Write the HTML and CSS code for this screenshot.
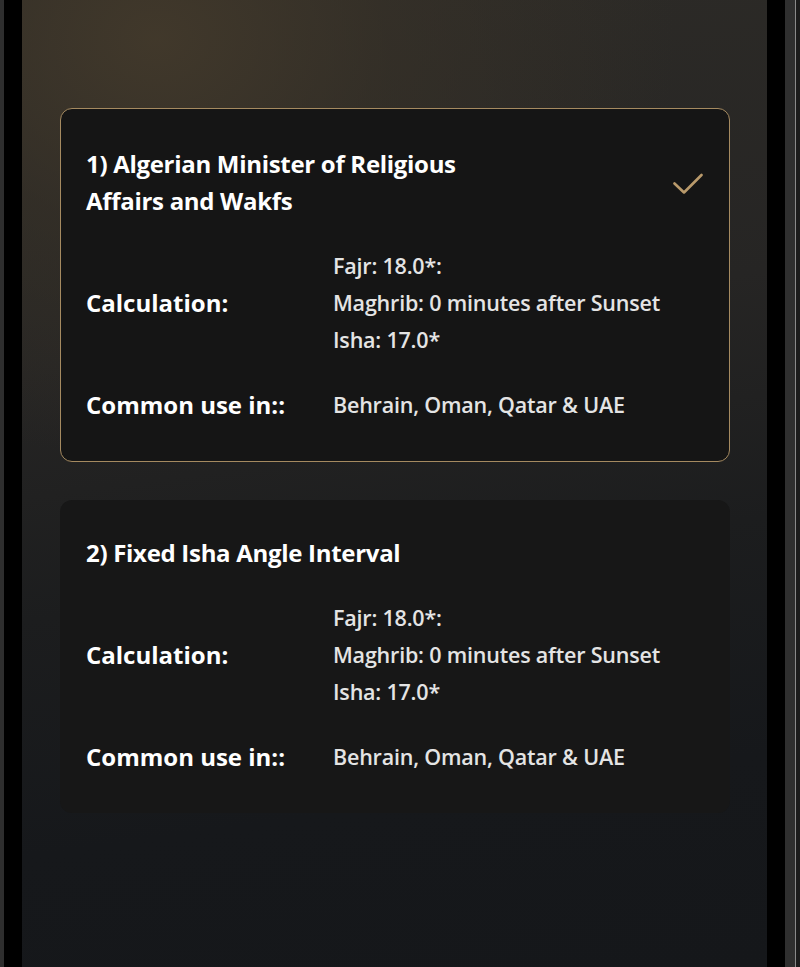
FILE: index.html
```html
<!DOCTYPE html>
<html lang="en">
<head>
<meta charset="utf-8">
<title>Calculation methods</title>
<link rel="stylesheet" href="styles.css">
</head>
<body>
<div class="device">
  <div class="edge-left"></div>
  <div class="bezel"></div>
  <main class="screen">
    <section class="card card--selected">
      <div class="card-head">
        <h2 class="card-title">1) Algerian Minister of Religious<br>Affairs and Wakfs</h2>
        <svg class="check" width="30" height="22" viewBox="0 0 30 22" aria-hidden="true">
          <path d="M1.5 10.5 L11 19.5 L28.5 2" fill="none" stroke="#b99a6b" stroke-width="2.6" stroke-linecap="round" stroke-linejoin="round"/>
        </svg>
      </div>
      <div class="info">
        <div class="info-label">Calculation:</div>
        <div class="info-values">
          <div>Fajr: 18.0*:</div>
          <div>Maghrib: 0 minutes after Sunset</div>
          <div>Isha: 17.0*</div>
        </div>
        <div class="info-label">Common use in::</div>
        <div class="info-values">
          <div>Behrain, Oman, Qatar &amp; UAE</div>
        </div>
      </div>
    </section>
    <section class="card card--plain">
      <div class="card-head">
        <h2 class="card-title">2) Fixed Isha Angle Interval</h2>
      </div>
      <div class="info">
        <div class="info-label">Calculation:</div>
        <div class="info-values">
          <div>Fajr: 18.0*:</div>
          <div>Maghrib: 0 minutes after Sunset</div>
          <div>Isha: 17.0*</div>
        </div>
        <div class="info-label">Common use in::</div>
        <div class="info-values">
          <div>Behrain, Oman, Qatar &amp; UAE</div>
        </div>
      </div>
    </section>
  </main>
  <div class="bezel"></div>
  <div class="edge-right">
    <div class="edge-strip"></div>
    <div class="edge-line"></div>
    <div class="edge-tail"></div>
  </div>
</div>
</body>
</html>
```
FILE: styles.css
```css
* { box-sizing: border-box; }
html, body { margin: 0; padding: 0; }
body {
  background: #000;
  font-family: "Open Sans", "Liberation Sans", sans-serif;
  color: #fff;
}
.device {
  display: flex;
  height: 967px;
  width: 800px;
  overflow: hidden;
}
.edge-left { width: 4px; background: #2e2e2e; }
.bezel { width: 18px; background: #000; }
.screen {
  width: 745px;
  padding: 108px 0 0 38px;
  display: flex;
  flex-direction: column;
  gap: 38px;
  background:
    radial-gradient(ellipse 520px 420px at 18% 4%, rgba(66,57,43,0.95) 0%, rgba(58,51,40,0.55) 45%, rgba(40,38,34,0) 100%),
    linear-gradient(172deg, #2d2b27 0%, #262524 35%, #1c1d1e 58%, #16181b 80%, #15171a 100%);
}
.edge-right { width: 15px; display: flex; }
.edge-strip { width: 10px; background: #2f2f2f; }
.edge-line { width: 1px; background: #8a8a8a; }
.edge-tail { width: 4px; background: #1c1c1c; }

.card {
  width: 670px;
  border-radius: 12px;
  background: #151515;
  padding: 36px 26px 38px 25px;
}
.card--selected { border: 1px solid #a58a60; }
.card--plain { background: #171717; padding: 34px 26px 38px 26px; }

.card-head {
  display: flex;
  align-items: center;
  justify-content: space-between;
}
.card-title {
  margin: 0;
  font-size: 24px;
  line-height: 37px;
  font-weight: 700;
  letter-spacing: -0.3px;
  color: #fff;
}
.check { margin-top: 4px; }

.info {
  margin-top: 28px;
  display: grid;
  grid-template-columns: 247px 1fr;
  row-gap: 28px;
  align-items: center;
}
.info-label {
  font-size: 24px;
  line-height: 37px;
  font-weight: 700;
  color: #fff;
}
.info-values {
  font-size: 21.5px;
  line-height: 37px;
  font-weight: 600;
  letter-spacing: -0.2px;
  color: #e4e4e4;
}
```
